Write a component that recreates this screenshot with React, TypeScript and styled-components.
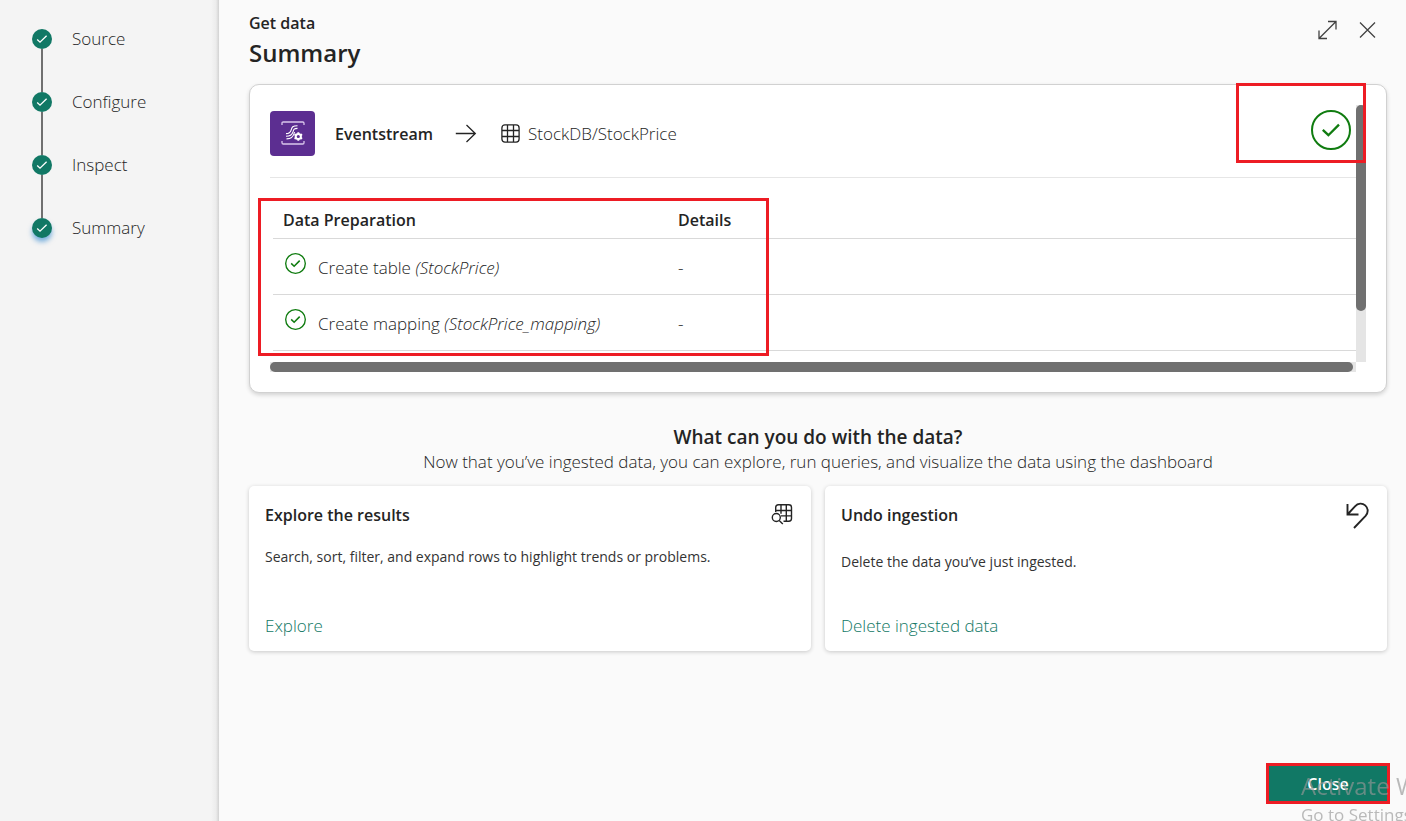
import React from "react";
import styled, { createGlobalStyle } from "styled-components";

const GlobalStyle = createGlobalStyle`
  *, *::before, *::after { box-sizing: border-box; }
  body {
    margin: 0;
    background: #fafafa;
    color: #242424;
    font-family: "Open Sans", "Noto Sans", sans-serif;
    font-size: 17px;
    font-weight: 350;
    line-height: 24px;
  }
  h1, h2, h3, p, ol { margin: 0; padding: 0; }
  button { font-family: inherit; }
`;

const Page = styled.div`
  display: flex;
  min-height: 100vh;
`;

const Sidebar = styled.nav`
  flex: 0 0 219px;
  padding: 27px 32px;
  background: linear-gradient(to right, #f4f4f4 calc(100% - 8px), #ececec calc(100% - 3px), #d2d2d2);
`;

const Steps = styled.ol`
  display: flex;
  flex-direction: column;
  list-style: none;
`;

const Step = styled.li`
  display: flex;
  align-items: center;
  gap: 20px;
  height: 24px;
`;

const Connector = styled.li`
  width: 2px;
  height: 43px;
  margin: -2px 9px;
  background: #707070;
`;

const StepDot = styled.span<{ $current?: boolean }>`
  position: relative;
  display: flex;
  align-items: center;
  justify-content: center;
  width: 20px;
  height: 20px;
  border-radius: 50%;
  background: #117865;
  box-shadow: ${(p) => (p.$current ? "0 4px 5px rgba(0, 110, 200, 0.5)" : "none")};
`;

const Main = styled.main`
  flex: 1;
  min-width: 0;
  display: flex;
  flex-direction: column;
  padding: 11px 19px 17px 30px;
`;

const Header = styled.header`
  display: flex;
  justify-content: space-between;
  height: 73px;
`;

const Kicker = styled.p`
  font-size: 16px;
  font-weight: 600;
`;

const Title = styled.h1`
  font-size: 24px;
  line-height: 36px;
  font-weight: 600;
`;

const HeaderActions = styled.div`
  display: flex;
  align-items: flex-start;
  gap: 16px;
  padding: 7px 8px 0 0;
`;

const IconButton = styled.button`
  display: flex;
  padding: 0;
  border: 0;
  background: none;
  color: #424242;
  cursor: pointer;
`;

const SummaryCard = styled.section`
  position: relative;
  display: grid;
  grid-template-columns: minmax(0, 1fr) 10px;
  padding: 20px;
  border: 1px solid #d1d1d1;
  border-radius: 10px;
  background: #fff;
  box-shadow: 0 2px 4px rgba(0, 0, 0, 0.16);
`;

const Viewport = styled.div`
  height: 257px;
  overflow: hidden;
`;

const VerticalTrack = styled.div`
  background: #e5e5e5;
`;

const VerticalThumb = styled.div`
  height: 80%;
  border-radius: 5px;
  background: #707070;
`;

const HorizontalTrack = styled.div`
  height: 10px;
  padding-right: 3px;
  background: #e5e5e5;
`;

const HorizontalThumb = styled.div`
  height: 10px;
  border-radius: 5px;
  background: #707070;
`;

const Route = styled.div`
  display: flex;
  align-items: center;
  height: 73px;
  padding: 0 5px 16px 0;
  border-bottom: 1px solid #e6e6e6;
`;

const SourceTile = styled.span`
  display: flex;
  align-items: center;
  justify-content: center;
  width: 45px;
  height: 45px;
  margin-right: 20px;
  border-radius: 4px;
  background: #5c2e91;
`;

const SourceName = styled.strong`
  margin-right: 22px;
  padding-top: 2px;
  font-size: 16px;
  font-weight: 600;
`;

const Target = styled.span`
  display: flex;
  align-items: center;
  flex: 1;
  gap: 8px;
  margin-left: 24px;
  padding-top: 2px;

  svg {
    margin-bottom: 2px;
  }
`;

const Status = styled.span`
  display: flex;
  padding-bottom: 6px;
`;

const Table = styled.table`
  width: calc(100% - 3px);
  margin: 22px 0 0 3px;
  border-collapse: collapse;
  table-layout: fixed;
  text-align: left;
`;

const HeadCell = styled.th<{ $wide?: boolean }>`
  width: ${(p) => (p.$wide ? "395px" : "auto")};
  height: 38px;
  padding: 2px 10px 0;
  border-bottom: 1px solid #d9d9d9;
  font-size: 16px;
  font-weight: 600;
`;

const Cell = styled.td`
  height: 56px;
  padding: 4px 10px 0;
  border-bottom: 1px solid #d9d9d9;
`;

const Task = styled.span`
  display: flex;
  align-items: flex-start;
  gap: 12px;
  padding-left: 2px;

  svg {
    margin-top: -3px;
  }
`;

const Highlight = styled.span<{ $top: number; $left?: number; $right?: number; $width: number; $height: number }>`
  position: absolute;
  top: ${(p) => p.$top}px;
  left: ${(p) => (p.$left === undefined ? "auto" : `${p.$left}px`)};
  right: ${(p) => (p.$right === undefined ? "auto" : `${p.$right}px`)};
  width: ${(p) => p.$width}px;
  height: ${(p) => p.$height}px;
  border: 3px solid #ed1c24;
  pointer-events: none;
`;

const Intro = styled.div`
  margin: 32px 0 12px;
  text-align: center;
`;

const IntroTitle = styled.h2`
  font-size: 19px;
  line-height: 25px;
  font-weight: 600;
`;

const NextSteps = styled.div`
  display: grid;
  grid-template-columns: 1fr 1fr;
  gap: 14px;
`;

const NextCard = styled.section`
  display: flex;
  flex-direction: column;
  height: 165px;
  padding: 16px;
  border-radius: 5px;
  background: #fff;
  box-shadow: 0 1px 4px rgba(0, 0, 0, 0.2);
`;

const NextHead = styled.div`
  display: flex;
  justify-content: space-between;
  height: 28px;
  padding-right: 2px;
`;

const NextTitle = styled.h3`
  font-size: 16px;
  line-height: 26px;
  font-weight: 600;
`;

const NextText = styled.p<{ $lowered?: boolean }>`
  margin-top: ${(p) => (p.$lowered ? 20 : 15)}px;
  font-size: 14px;
  font-weight: 400;
  color: #333;
`;

const NextLink = styled.a`
  align-self: flex-start;
  margin-top: auto;
  margin-bottom: -3px;
  color: #117865;
  text-decoration: none;
`;

const Footer = styled.footer`
  display: flex;
  justify-content: flex-end;
  margin: auto -3px 0 0;
  padding-top: 24px;
`;

const CloseButton = styled.button`
  width: 124px;
  height: 41px;
  padding: 0;
  border: 3px solid #ed1c24;
  background: #117865;
  color: #fff;
  font-size: 16px;
  font-weight: 600;
  cursor: pointer;
`;

const Watermark = styled.aside`
  position: fixed;
  right: 0;
  bottom: 0;
  width: 105px;
  height: 50px;
  overflow: hidden;
  white-space: nowrap;
  font-weight: 400;
  color: rgba(150, 150, 150, 0.65);
  pointer-events: none;
`;

const WatermarkTitle = styled.p`
  font-size: 24px;
  line-height: 30px;
`;

const WatermarkText = styled.p`
  font-size: 17px;
  line-height: 28px;
`;

const StepCheck = () => (
  <svg width="12" height="12" viewBox="0 0 12 12" fill="none" stroke="#fff" strokeWidth="1.3" aria-hidden="true">
    <path d="M1.2 6.6 4 9.2 10.6 2.8" />
  </svg>
);

const CircleCheck = ({ size, weight }: { size: number; weight: number }) => (
  <svg width={size} height={size} viewBox="0 0 40 40" fill="none" stroke="#107c10" aria-hidden="true">
    <circle cx="20" cy="20" r={20 - weight / 2} strokeWidth={weight} />
    <path d="m11.8 19.8 5.6 5.4L28 14.6" strokeWidth={weight * 1.15} />
  </svg>
);

const GridIcon = () => (
  <svg width="19" height="19" viewBox="0 0 19 19" fill="none" stroke="#242424" strokeWidth="1.3" aria-hidden="true">
    <rect x="0.9" y="0.9" width="17.2" height="17.2" rx="3" />
    <path d="M1 6.5h17M1 12.5h17M6.5 1v17M12.5 1v17" />
  </svg>
);

const EventstreamIcon = () => (
  <svg width="24" height="24" viewBox="0 0 24 24" fill="none" stroke="#fff" strokeWidth="1.1" aria-hidden="true">
    <path d="M1 4V2.200Q1 1 2.200 1h19.600Q23 1 23 2.200V4M1 20v1.800Q1 23 2.200 23h19.600q1.200 0 1.200-1.200V20" stroke="#d9c7ec" strokeWidth="1.300" />
    <path d="M16.500 4.800c-5 0-5.500 1.200-6.300 4-.7 2.600-1.600 3.800-5.200 3.800" />
    <path d="M16.500 7.400c-3.500 0-3.800 1-4.500 3.400-.9 3-2.500 4.500-7 4.500" />
    <path d="M13.500 11c-.8 4.500-3.200 6.900-8 6.900" />
    <circle cx="17.300" cy="15.500" r="2.600" strokeWidth="2" />
    <path d="M17.300 11.200v1.500M17.300 18.300v1.500M13.500 13.300l1.400.8M19.700 16.900l1.400.8M13.500 17.700l1.400-.8M19.700 14.100l1.400-.8" strokeWidth="1.900" />
  </svg>
);

const ArrowIcon = () => (
  <svg width="22" height="20" viewBox="0 0 22 20" fill="none" stroke="#242424" strokeWidth="1.300" aria-hidden="true">
    <path d="M.8 10.500h19.400M11.500 2l8.800 8.500-8.800 8.500" />
  </svg>
);

const ExpandIcon = () => (
  <svg width="24" height="24" viewBox="0 0 24 24" fill="none" stroke="currentColor" strokeWidth="1.300" aria-hidden="true">
    <path d="M4 20.500l17-17M13 3.500h8v8M4 12.500v8h8" />
  </svg>
);

const CloseIcon = () => (
  <svg width="24" height="24" viewBox="0 0 24 24" fill="none" stroke="currentColor" strokeWidth="1.300" aria-hidden="true">
    <path d="m5 4.500 15 15M20 4.500l-15 15" />
  </svg>
);

const GridSearchIcon = () => (
  <svg width="24" height="24" viewBox="0 0 24 24" fill="none" stroke="#242424" strokeWidth="1.400" aria-hidden="true">
    <path d="M6.700 10V5.500q0-2.700 2.700-2.700h10.400q2.700 0 2.700 2.700v11q0 2.700-2.700 2.700h-5.300M6.700 8.500h15.800M12 13.900h10.500M12 2.800v9M17.300 2.800v16.400" />
    <circle cx="7.300" cy="15.500" r="4" />
    <path d="m10.200 18.400 3.600 3.600" />
  </svg>
);

const UndoIcon = () => (
  <svg width="24" height="28" viewBox="0 0 24 28" fill="none" stroke="#242424" strokeWidth="1.900" aria-hidden="true">
    <path d="M2.500 2v10.500h11M2.500 12.500l7.500-8.200c3-3.200 7.300-3.500 10.200-.9 3.200 2.900 3.300 7.300.4 10.500L9 26" />
  </svg>
);

const steps = ["Source", "Configure", "Inspect", "Summary"];

const tasks = [
  { label: "Create table", target: "(StockPrice)", details: "-" },
  { label: "Create mapping", target: "(StockPrice_mapping)", details: "-" },
];

export default function App() {
  return (
    <Page>
      <GlobalStyle />
      <Sidebar aria-label="Progress">
        <Steps>
          {steps.map((step, i) => (
            <React.Fragment key={step}>
              {i > 0 && <Connector aria-hidden="true" />}
              <Step>
                <StepDot $current={i === steps.length - 1}>
                  <StepCheck />
                </StepDot>
                {step}
              </Step>
            </React.Fragment>
          ))}
        </Steps>
      </Sidebar>
      <Main>
        <Header>
          <div>
            <Kicker>Get data</Kicker>
            <Title>Summary</Title>
          </div>
          <HeaderActions>
            <IconButton aria-label="Expand">
              <ExpandIcon />
            </IconButton>
            <IconButton aria-label="Close dialog">
              <CloseIcon />
            </IconButton>
          </HeaderActions>
        </Header>

        <SummaryCard>
          <Viewport>
            <Route>
              <SourceTile>
                <EventstreamIcon />
              </SourceTile>
              <SourceName>Eventstream</SourceName>
              <ArrowIcon />
              <Target>
                <GridIcon />
                StockDB/StockPrice
              </Target>
              <Status>
                <CircleCheck size={40} weight={2} />
              </Status>
            </Route>
            <Table>
              <thead>
                <tr>
                  <HeadCell $wide>Data Preparation</HeadCell>
                  <HeadCell>Details</HeadCell>
                </tr>
              </thead>
              <tbody>
                {tasks.map((task) => (
                  <tr key={task.label}>
                    <Cell>
                      <Task>
                        <CircleCheck size={21} weight={2.6} />
                        <span>
                          {task.label} <em>{task.target}</em>
                        </span>
                      </Task>
                    </Cell>
                    <Cell>{task.details}</Cell>
                  </tr>
                ))}
              </tbody>
            </Table>
          </Viewport>
          <VerticalTrack>
            <VerticalThumb />
          </VerticalTrack>
          <HorizontalTrack>
            <HorizontalThumb />
          </HorizontalTrack>
          <Highlight $top={113} $left={8} $width={511} $height={158} />
          <Highlight $top={-2} $right={20} $width={130} $height={80} />
        </SummaryCard>

        <Intro>
          <IntroTitle>What can you do with the data?</IntroTitle>
          <p>Now that you’ve ingested data, you can explore, run queries, and visualize the data using the dashboard</p>
        </Intro>

        <NextSteps>
          <NextCard>
            <NextHead>
              <NextTitle>Explore the results</NextTitle>
              <GridSearchIcon />
            </NextHead>
            <NextText>Search, sort, filter, and expand rows to highlight trends or problems.</NextText>
            <NextLink href="#explore">Explore</NextLink>
          </NextCard>
          <NextCard>
            <NextHead>
              <NextTitle>Undo ingestion</NextTitle>
              <UndoIcon />
            </NextHead>
            <NextText $lowered>Delete the data you’ve just ingested.</NextText>
            <NextLink href="#delete">Delete ingested data</NextLink>
          </NextCard>
        </NextSteps>

        <Footer>
          <CloseButton>Close</CloseButton>
        </Footer>
      </Main>
      <Watermark>
        <WatermarkTitle>Activate Windows</WatermarkTitle>
        <WatermarkText>Go to Settings</WatermarkText>
      </Watermark>
    </Page>
  );
}
